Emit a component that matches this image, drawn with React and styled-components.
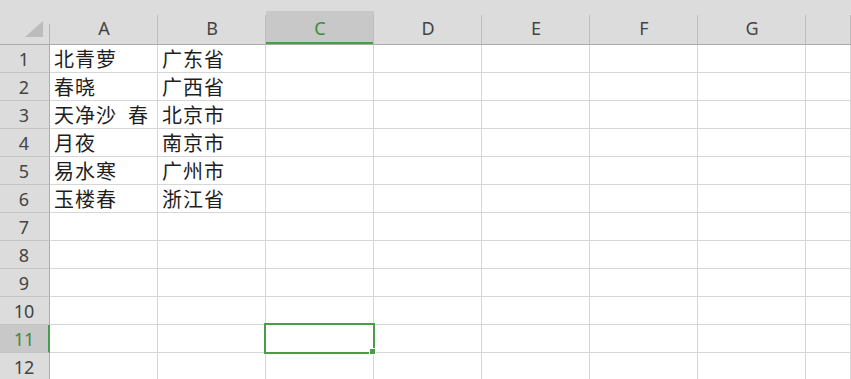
import React from "react";
import styled, { createGlobalStyle, css } from "styled-components";

const Global = createGlobalStyle`
  html, body { margin: 0; padding: 0; background: #ffffff; }
  body { overflow: hidden; }
`;

const GREEN = "#4a9c4a";
const HEADER_BG = "#dcdcdc";
const HEADER_SEL = "#c8c8c8";
const GRID = "#d6d6d6";

const Sheet = styled.div`
  width: 851px;
  height: 379px;
  overflow: hidden;
  display: grid;
  grid-template-columns: 50px repeat(7, 108px) 1fr;
  grid-template-rows: 45px repeat(12, 28px);
  font-family: "Noto Sans", "Open Sans", sans-serif;
  background: #ffffff;
`;

const Corner = styled.div`
  background: ${HEADER_BG};
  position: relative;
  box-sizing: border-box;
  border-bottom: 1px solid #ababab;
  display: flex;
  align-items: flex-end;
  justify-content: flex-end;
  padding: 0 7px 7px 0;
  &::after {
    content: "";
    position: absolute;
    right: 0;
    top: 24px;
    bottom: 0;
    width: 1px;
    background: #b4b4b4;
  }
`;

const CornerTriangle = styled.svg`
  display: block;
`;

const ColHeader = styled.div`
  position: relative;
  box-sizing: border-box;
  background: ${HEADER_BG};
  border-bottom: 1px solid #ababab;
  display: flex;
  align-items: flex-end;
  justify-content: center;
  padding-top: 11px;
  font-size: 18px;
  color: #444444;
  &::after {
    content: "";
    position: absolute;
    right: 0;
    top: 15px;
    bottom: 0;
    width: 1px;
    background: #bdbdbd;
  }
`;

const ColLabel = styled.div`
  height: 33px;
  box-sizing: border-box;
  flex: 1;
  display: flex;
  align-items: center;
  justify-content: center;
  ${(p) =>
    p.$selected &&
    css`
      background: ${HEADER_SEL};
      color: #3e8a3e;
      border-bottom: 2px solid ${GREEN};
      padding-top: 2px;
    `}
`;

const RowHeader = styled.div`
  box-sizing: border-box;
  background: ${(p) => (p.$selected ? HEADER_SEL : HEADER_BG)};
  color: ${(p) => (p.$selected ? "#3e8a3e" : "#444444")};
  border-right: ${(p) => (p.$selected ? `2px solid ${GREEN}` : "1px solid #ababab")};
  border-bottom: 1px solid #c4c4c4;
  display: flex;
  align-items: center;
  justify-content: center;
  font-size: 18px;
  padding-right: ${(p) => (p.$selected ? "0" : "1px")};
`;

const Cell = styled.div`
  position: relative;
  box-sizing: border-box;
  border-right: 1px solid ${GRID};
  border-bottom: 1px solid ${GRID};
  display: flex;
  align-items: center;
  padding-left: 4px;
  white-space: pre;
  font-family: "Noto Sans CJK SC", "Noto Sans", sans-serif;
  font-size: 20px;
  letter-spacing: 1px;
  color: #1e1e1e;
  ${(p) =>
    p.$active &&
    css`
      &::before {
        content: "";
        position: absolute;
        left: -2px;
        top: -2px;
        right: -2px;
        bottom: -2px;
        border: 2px solid ${GREEN};
        z-index: 2;
      }
      &::after {
        content: "";
        position: absolute;
        right: -3px;
        bottom: -3px;
        width: 5px;
        height: 5px;
        background: ${GREEN};
        border: 1px solid #ffffff;
        z-index: 3;
      }
    `}
`;

const columns = ["A", "B", "C", "D", "E", "F", "G", ""];
const data = [
  ["北青萝", "广东省"],
  ["春晓", "广西省"],
  ["天净沙\u2002春", "北京市"],
  ["月夜", "南京市"],
  ["易水寒", "广州市"],
  ["玉楼春", "浙江省"],
];

export default function App() {
  const rows = Array.from({ length: 12 }, (_, i) => i + 1);
  return (
    <>
      <Global />
      <Sheet>
        <Corner>
          <CornerTriangle width="18" height="16" viewBox="0 0 18 16">
            <polygon points="18,0 18,16 0,16" fill="#bcbcbc" />
          </CornerTriangle>
        </Corner>
        {columns.map((c, i) => (
          <ColHeader key={"h" + i}>
            <ColLabel $selected={c === "C"}>{c}</ColLabel>
          </ColHeader>
        ))}
        {rows.map((r) => (
          <React.Fragment key={r}>
            <RowHeader $selected={r === 11}>{r}</RowHeader>
            {columns.map((c, ci) => (
              <Cell key={c + ci} $active={r === 11 && c === "C"}>
                {data[r - 1] && data[r - 1][ci] ? data[r - 1][ci] : ""}
              </Cell>
            ))}
          </React.Fragment>
        ))}
      </Sheet>
    </>
  );
}
